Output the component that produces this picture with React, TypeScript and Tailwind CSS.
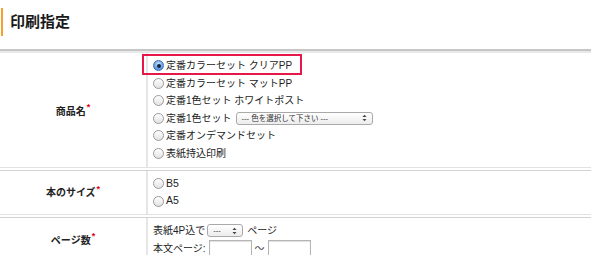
import React from "react";

const FONT = { fontFamily: '"Liberation Sans", "Noto Sans CJK JP", sans-serif' };

function Radio({ checked = false }: { checked?: boolean }) {
  return checked ? (
    <span className="inline-flex items-center justify-center w-[11px] h-[11px] rounded-full border border-[#3d6fb6] bg-[radial-gradient(circle_at_50%_35%,#cfe4fb_0%,#6ea6e6_55%,#3b78cf_100%)] mr-[2px] shrink-0">
      <span className="w-[4px] h-[4px] rounded-full bg-[#14233d]" />
    </span>
  ) : (
    <span className="inline-block w-[11px] h-[11px] rounded-full border border-[#9c9c9c] bg-[linear-gradient(#ffffff,#e2e2e2)] mr-[2px] shrink-0" />
  );
}

function Arrows() {
  return (
    <svg width="5" height="8" viewBox="0 0 5 8" className="shrink-0">
      <path d="M0.5 3 L2.5 0.8 L4.5 3 Z" fill="#444" />
      <path d="M0.5 5 L2.5 7.2 L4.5 5 Z" fill="#444" />
    </svg>
  );
}

function Asterisk() {
  return <span className="text-[#e0001b] text-[9px] relative -top-[3px] ml-[1px]">*</span>;
}

function Separator() {
  return (
    <div className="h-[4px] border-t border-b border-t-[#e2e2e2] border-b-[#d2d2d2] bg-white" />
  );
}

export default function App() {
  const products = [
    "定番カラーセット クリアPP",
    "定番カラーセット マットPP",
    "定番1色セット ホワイトポスト",
    "定番1色セット",
    "定番オンデマンドセット",
    "表紙持込印刷",
  ];

  return (
    <div className="relative w-[600px] h-[255px] overflow-hidden bg-white text-[#222]" style={FONT}>
      {/* 見出し */}
      <div className="pt-[8px] pl-[1px]">
        <h2 className="h-[28px] border-l-2 border-[#f3a12c] pl-[7px] flex items-center text-[15px] font-bold text-[#1a1a1a]">
          印刷指定
        </h2>
      </div>

      <div className="mt-[13px] w-[591px] text-[10px]">
        <div className="h-[2px] bg-[#c6c6c6]" />
        <div className="h-[2px] bg-[#e8e8e8]" />

        {/* 商品名 */}
        <div className="grid grid-cols-[148px_1fr]">
          <div className="border-r-2 border-[#e6e6e6] flex items-center justify-center font-bold pt-[2px]">
            商品名<Asterisk />
          </div>
          <div className="pt-[4px] pb-[5px] pl-[5px]">
            {products.map((p, i) => (
              <div key={p} className="h-[17.5px] flex items-center">
                <Radio checked={i === 0} />
                <span>{p}</span>
                {i === 3 && (
                  <span className="ml-[4px] inline-flex items-center justify-between w-[137px] h-[13px] px-[5px] border border-[#a9a9a9] rounded-[3px] bg-[linear-gradient(#ffffff,#ececec)] text-[7.5px] text-[#333]">
                    <span>--- 色を選択して下さい ---</span>
                    <Arrows />
                  </span>
                )}
              </div>
            ))}
          </div>
        </div>
        <Separator />

        {/* 本のサイズ */}
        <div className="grid grid-cols-[148px_1fr]">
          <div className="border-r-2 border-[#e6e6e6] flex items-center justify-center font-bold">
            本のサイズ<Asterisk />
          </div>
          <div className="pt-[4px] pb-[4px] pl-[5px]">
            {["B5", "A5"].map((s) => (
              <div key={s} className="h-[17.5px] flex items-center">
                <Radio />
                <span className="text-[10.5px]">{s}</span>
              </div>
            ))}
          </div>
        </div>
        <Separator />

        {/* ページ数 */}
        <div className="grid grid-cols-[148px_1fr]">
          <div className="border-r-2 border-[#e6e6e6] flex items-center justify-center font-bold">
            ページ数<Asterisk />
          </div>
          <div className="pt-[4px] pb-[5px] pl-[5px]">
            <div className="h-[17.5px] flex items-center">
              <span>表紙4P込で</span>
              <span className="ml-[2px] inline-flex items-center justify-between w-[36px] h-[13px] px-[5px] border border-[#a9a9a9] rounded-[3px] bg-[linear-gradient(#ffffff,#ececec)] text-[7.5px] text-[#333]">
                <span>---</span>
                <Arrows />
              </span>
              <span className="ml-[4px]">ページ</span>
            </div>
            <div className="h-[17.5px] flex items-center">
              <span>本文ページ:</span>
              <span className="ml-[3px] w-[43px] h-[16px] border border-[#b4b4b4] shadow-[inset_0_1px_1px_rgba(0,0,0,0.12)] bg-white" />
              <span className="mx-[3px] text-[#444]">〜</span>
              <span className="w-[43px] h-[16px] border border-[#b4b4b4] shadow-[inset_0_1px_1px_rgba(0,0,0,0.12)] bg-white" />
            </div>
          </div>
        </div>
      </div>

      {/* 選択中を示す赤枠 */}
      <div className="absolute left-[142px] top-[54px] w-[160px] h-[21px] border-2 border-[#e8174a] pointer-events-none" />
    </div>
  );
}
